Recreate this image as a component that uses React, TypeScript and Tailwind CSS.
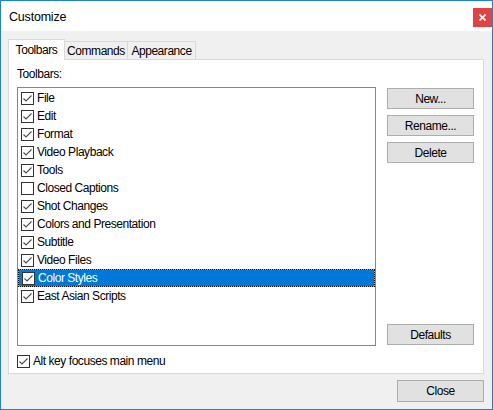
import React from 'react'

const items = [
  { name: 'File', on: true },
  { name: 'Edit', on: true },
  { name: 'Format', on: true },
  { name: 'Video Playback', on: true },
  { name: 'Tools', on: true },
  { name: 'Closed Captions', on: false },
  { name: 'Shot Changes', on: true },
  { name: 'Colors and Presentation', on: true },
  { name: 'Subtitle', on: true },
  { name: 'Video Files', on: true },
  { name: 'Color Styles', on: true },
  { name: 'East Asian Scripts', on: true },
]

function Check({ on }: { on: boolean }) {
  return (
    <span className="w-[13px] h-[13px] border border-[#333333] bg-white flex items-center justify-center shrink-0">
      {on && (
        <svg width="11" height="11" viewBox="0 0 11 11">
          <path d="M1.5 5.5 L4 8 L9.5 2.5" fill="none" stroke="#4d4d4d" strokeWidth="1.1" />
        </svg>
      )}
    </span>
  )
}

function Btn({ label, cls = '' }: { label: string; cls?: string }) {
  return (
    <button className={`w-[87px] h-[21px] bg-[#e1e1e1] border border-[#adadad] text-black leading-none ${cls}`}>
      {label}
    </button>
  )
}

export default function App() {
  return (
    <div
      className="w-[493px] h-[410px] border border-[#1883d7] bg-[#f0f0f0] flex flex-col text-[12px] tracking-[-0.45px] text-black"
      style={{ fontFamily: '"Liberation Sans", Arial, sans-serif' }}
    >
      {/* title bar */}
      <div className="h-[30px] bg-white flex items-start justify-between shrink-0">
        <span className="pl-[8px] pt-[9px] text-[12.5px] leading-[14px] tracking-[-0.2px]">Customize</span>
        <div className="mt-[7px] w-[19px] h-[19px] bg-[#e04343] flex items-center justify-center">
          <svg width="7" height="7" viewBox="0 0 7 7">
            <path d="M0.5 0.5 L6.5 6.5 M6.5 0.5 L0.5 6.5" stroke="#fff" strokeWidth="1.6" />
          </svg>
        </div>
      </div>

      <div className="flex-1 flex flex-col pl-[7px] pr-[8px] pt-[8px]">
        {/* tabs */}
        <div className="flex items-end h-[20px] relative z-10">
          <div className="h-[21px] mb-[-1px] w-[57px] border border-b-0 border-[#d9d9d9] bg-white flex items-center justify-center pb-[1px]">
            Toolbars
          </div>
          <div className="h-[18px] w-[63px] border border-l-0 border-b-0 border-[#d9d9d9] flex items-center justify-center">
            Commands
          </div>
          <div className="h-[18px] w-[68px] border border-l-0 border-b-0 border-[#d9d9d9] flex items-center justify-center">
            Appearance
          </div>
        </div>

        {/* panel */}
        <div className="w-[476px] h-[315px] border border-[#d9d9d9] bg-white flex flex-col pl-[8px] pr-[8px] pt-[7px]">
          <div className="h-[14px] leading-[14px]">Toolbars:</div>
          <div className="flex mt-[6px] gap-[11px]">
            <div className="w-[359px] h-[259px] border border-[#828790] bg-white pt-[1px]">
              {items.map((it, i) => {
                const sel = i === 10
                return (
                  <div
                    key={it.name}
                    className={`h-[18px] flex items-center gap-[3px] pl-[3px] ${
                      sel
                        ? 'bg-[#0078d7] text-white border border-[#f39a1e] outline-1 outline-dotted outline-black -outline-offset-1 pl-[2px]'
                        : ''
                    }`}
                  >
                    <Check on={it.on} />
                    <span className="leading-[14px]">{it.name}</span>
                  </div>
                )
              })}
            </div>
            <div className="flex flex-col justify-between pt-[1px] pb-[1px]">
              <div className="flex flex-col gap-[6px]">
                <Btn label="New..." />
                <Btn label="Rename..." />
                <Btn label="Delete" />
              </div>
              <Btn label="Defaults" />
            </div>
          </div>
          <div className="flex items-center gap-[3px] mt-[8px]">
            <Check on />
            <span className="leading-[14px]">Alt key focuses main menu</span>
          </div>
        </div>

        <div className="flex justify-end mt-[6px]">
          <button className="w-[87px] h-[22px] bg-[#e1e1e1] border border-[#adadad] leading-none">
            Close
          </button>
        </div>
      </div>
    </div>
  )
}
